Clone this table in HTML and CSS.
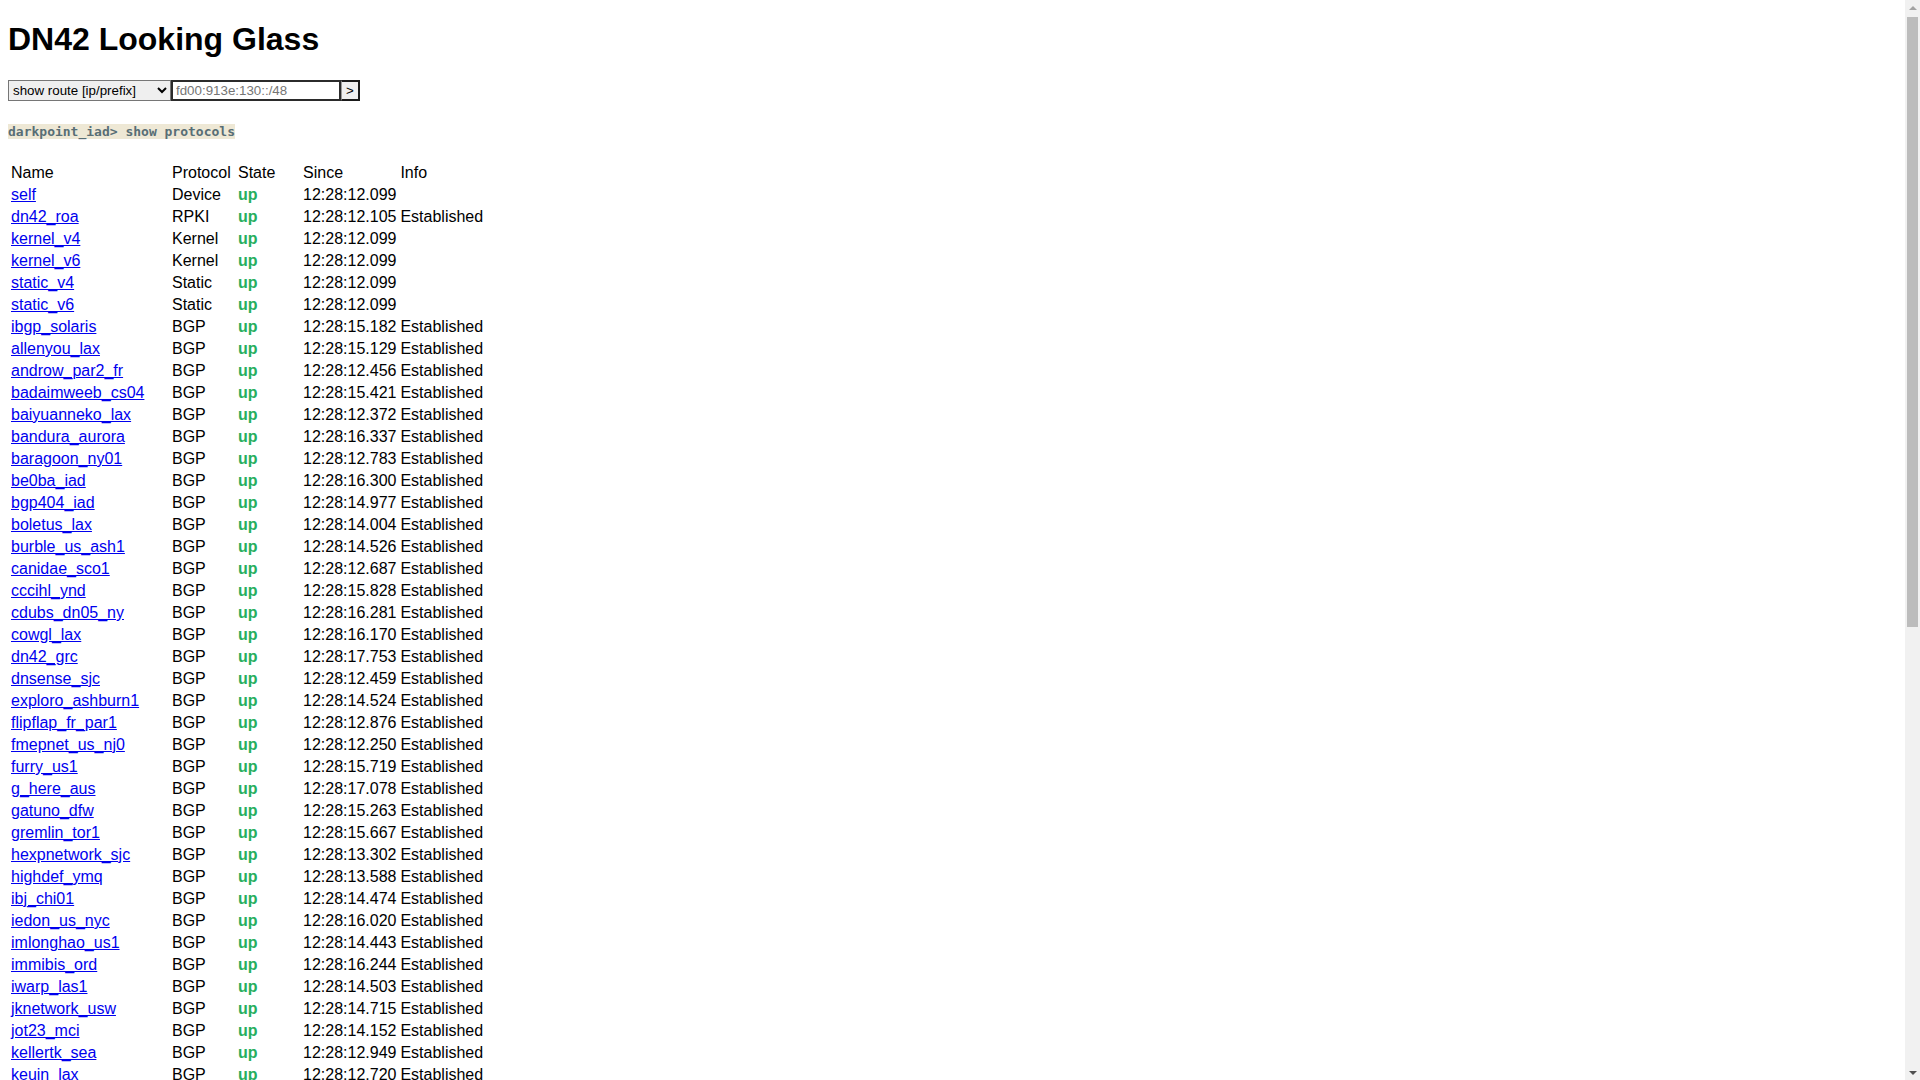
FILE: index.html
```html
<!DOCTYPE html>
<html>
<head>
<meta charset="utf-8">
<title>DN42 Looking Glass</title>
<link rel="stylesheet" href="styles.css">
</head>
<body>
<h1 class="title">DN42 Looking Glass</h1>
<form class="query">
<select class="query-type">
<option>show route [ip/prefix]</option>
<option>show protocols</option>
<option>traceroute</option>
<option>whois</option>
</select><input class="query-target" type="text" placeholder="fd00:913e:130::/48"><button class="query-go" type="button">&gt;</button>
</form>
<pre class="cmd"><code>darkpoint_iad&gt; show protocols</code></pre>
<table class="protocols">
<thead>
<tr><th class="c-name">Name</th><th class="c-proto">Protocol</th><th class="c-state">State</th><th>Since</th><th>Info</th></tr>
</thead>
<tbody>
<tr><td><a href="#">self</a></td><td>Device</td><td class="up">up</td><td>12:28:12.099</td><td></td></tr>
<tr><td><a href="#">dn42_roa</a></td><td>RPKI</td><td class="up">up</td><td>12:28:12.105</td><td>Established</td></tr>
<tr><td><a href="#">kernel_v4</a></td><td>Kernel</td><td class="up">up</td><td>12:28:12.099</td><td></td></tr>
<tr><td><a href="#">kernel_v6</a></td><td>Kernel</td><td class="up">up</td><td>12:28:12.099</td><td></td></tr>
<tr><td><a href="#">static_v4</a></td><td>Static</td><td class="up">up</td><td>12:28:12.099</td><td></td></tr>
<tr><td><a href="#">static_v6</a></td><td>Static</td><td class="up">up</td><td>12:28:12.099</td><td></td></tr>
<tr><td><a href="#">ibgp_solaris</a></td><td>BGP</td><td class="up">up</td><td>12:28:15.182</td><td>Established</td></tr>
<tr><td><a href="#">allenyou_lax</a></td><td>BGP</td><td class="up">up</td><td>12:28:15.129</td><td>Established</td></tr>
<tr><td><a href="#">androw_par2_fr</a></td><td>BGP</td><td class="up">up</td><td>12:28:12.456</td><td>Established</td></tr>
<tr><td><a href="#">badaimweeb_cs04</a></td><td>BGP</td><td class="up">up</td><td>12:28:15.421</td><td>Established</td></tr>
<tr><td><a href="#">baiyuanneko_lax</a></td><td>BGP</td><td class="up">up</td><td>12:28:12.372</td><td>Established</td></tr>
<tr><td><a href="#">bandura_aurora</a></td><td>BGP</td><td class="up">up</td><td>12:28:16.337</td><td>Established</td></tr>
<tr><td><a href="#">baragoon_ny01</a></td><td>BGP</td><td class="up">up</td><td>12:28:12.783</td><td>Established</td></tr>
<tr><td><a href="#">be0ba_iad</a></td><td>BGP</td><td class="up">up</td><td>12:28:16.300</td><td>Established</td></tr>
<tr><td><a href="#">bgp404_iad</a></td><td>BGP</td><td class="up">up</td><td>12:28:14.977</td><td>Established</td></tr>
<tr><td><a href="#">boletus_lax</a></td><td>BGP</td><td class="up">up</td><td>12:28:14.004</td><td>Established</td></tr>
<tr><td><a href="#">burble_us_ash1</a></td><td>BGP</td><td class="up">up</td><td>12:28:14.526</td><td>Established</td></tr>
<tr><td><a href="#">canidae_sco1</a></td><td>BGP</td><td class="up">up</td><td>12:28:12.687</td><td>Established</td></tr>
<tr><td><a href="#">cccihl_ynd</a></td><td>BGP</td><td class="up">up</td><td>12:28:15.828</td><td>Established</td></tr>
<tr><td><a href="#">cdubs_dn05_ny</a></td><td>BGP</td><td class="up">up</td><td>12:28:16.281</td><td>Established</td></tr>
<tr><td><a href="#">cowgl_lax</a></td><td>BGP</td><td class="up">up</td><td>12:28:16.170</td><td>Established</td></tr>
<tr><td><a href="#">dn42_grc</a></td><td>BGP</td><td class="up">up</td><td>12:28:17.753</td><td>Established</td></tr>
<tr><td><a href="#">dnsense_sjc</a></td><td>BGP</td><td class="up">up</td><td>12:28:12.459</td><td>Established</td></tr>
<tr><td><a href="#">exploro_ashburn1</a></td><td>BGP</td><td class="up">up</td><td>12:28:14.524</td><td>Established</td></tr>
<tr><td><a href="#">flipflap_fr_par1</a></td><td>BGP</td><td class="up">up</td><td>12:28:12.876</td><td>Established</td></tr>
<tr><td><a href="#">fmepnet_us_nj0</a></td><td>BGP</td><td class="up">up</td><td>12:28:12.250</td><td>Established</td></tr>
<tr><td><a href="#">furry_us1</a></td><td>BGP</td><td class="up">up</td><td>12:28:15.719</td><td>Established</td></tr>
<tr><td><a href="#">g_here_aus</a></td><td>BGP</td><td class="up">up</td><td>12:28:17.078</td><td>Established</td></tr>
<tr><td><a href="#">gatuno_dfw</a></td><td>BGP</td><td class="up">up</td><td>12:28:15.263</td><td>Established</td></tr>
<tr><td><a href="#">gremlin_tor1</a></td><td>BGP</td><td class="up">up</td><td>12:28:15.667</td><td>Established</td></tr>
<tr><td><a href="#">hexpnetwork_sjc</a></td><td>BGP</td><td class="up">up</td><td>12:28:13.302</td><td>Established</td></tr>
<tr><td><a href="#">highdef_ymq</a></td><td>BGP</td><td class="up">up</td><td>12:28:13.588</td><td>Established</td></tr>
<tr><td><a href="#">ibj_chi01</a></td><td>BGP</td><td class="up">up</td><td>12:28:14.474</td><td>Established</td></tr>
<tr><td><a href="#">iedon_us_nyc</a></td><td>BGP</td><td class="up">up</td><td>12:28:16.020</td><td>Established</td></tr>
<tr><td><a href="#">imlonghao_us1</a></td><td>BGP</td><td class="up">up</td><td>12:28:14.443</td><td>Established</td></tr>
<tr><td><a href="#">immibis_ord</a></td><td>BGP</td><td class="up">up</td><td>12:28:16.244</td><td>Established</td></tr>
<tr><td><a href="#">iwarp_las1</a></td><td>BGP</td><td class="up">up</td><td>12:28:14.503</td><td>Established</td></tr>
<tr><td><a href="#">jknetwork_usw</a></td><td>BGP</td><td class="up">up</td><td>12:28:14.715</td><td>Established</td></tr>
<tr><td><a href="#">jot23_mci</a></td><td>BGP</td><td class="up">up</td><td>12:28:14.152</td><td>Established</td></tr>
<tr><td><a href="#">kellertk_sea</a></td><td>BGP</td><td class="up">up</td><td>12:28:12.949</td><td>Established</td></tr>
<tr><td><a href="#">keuin_lax</a></td><td>BGP</td><td class="up">up</td><td>12:28:12.720</td><td>Established</td></tr>
<tr><td><a href="#">kioubit_us2</a></td><td>BGP</td><td class="up">up</td><td>12:28:13.114</td><td>Established</td></tr>
<tr><td><a href="#">lare_nyc</a></td><td>BGP</td><td class="up">up</td><td>12:28:15.006</td><td>Established</td></tr>
<tr><td><a href="#">lgp_iad</a></td><td>BGP</td><td class="up">up</td><td>12:28:12.811</td><td>Established</td></tr>
<tr><td><a href="#">lutoma_ord</a></td><td>BGP</td><td class="up">up</td><td>12:28:14.390</td><td>Established</td></tr>
<tr><td><a href="#">maraun_ewr</a></td><td>BGP</td><td class="up">up</td><td>12:28:16.552</td><td>Established</td></tr>
<tr><td><a href="#">mhmnet_lax</a></td><td>BGP</td><td class="up">up</td><td>12:28:12.604</td><td>Established</td></tr>
<tr><td><a href="#">moe233_lax</a></td><td>BGP</td><td class="up">up</td><td>12:28:13.745</td><td>Established</td></tr>
<tr><td><a href="#">mol_ord</a></td><td>BGP</td><td class="up">up</td><td>12:28:15.901</td><td>Established</td></tr>
<tr><td><a href="#">nedifinet_nyc</a></td><td>BGP</td><td class="up">up</td><td>12:28:14.238</td><td>Established</td></tr>
<tr><td><a href="#">nickel_chi</a></td><td>BGP</td><td class="up">up</td><td>12:28:12.987</td><td>Established</td></tr>
<tr><td><a href="#">oblivion_yyz</a></td><td>BGP</td><td class="up">up</td><td>12:28:16.411</td><td>Established</td></tr>
<tr><td><a href="#">potat0_lax</a></td><td>BGP</td><td class="up">up</td><td>12:28:13.059</td><td>Established</td></tr>
<tr><td><a href="#">prefixlabs_nyc</a></td><td>BGP</td><td class="up">up</td><td>12:28:15.372</td><td>Established</td></tr>
<tr><td><a href="#">routedbits_ord1</a></td><td>BGP</td><td class="up">up</td><td>12:28:14.660</td><td>Established</td></tr>
<tr><td><a href="#">sebastians_ash</a></td><td>BGP</td><td class="up">up</td><td>12:28:12.533</td><td>Established</td></tr>
<tr><td><a href="#">sernet_sea</a></td><td>BGP</td><td class="up">up</td><td>12:28:16.128</td><td>Established</td></tr>
<tr><td><a href="#">shimanokun_tyo</a></td><td>BGP</td><td class="up">up</td><td>12:28:13.477</td><td>Established</td></tr>
<tr><td><a href="#">simonlin_sfo</a></td><td>BGP</td><td class="up">up</td><td>12:28:15.590</td><td>Established</td></tr>
<tr><td><a href="#">stuart_nyc1</a></td><td>BGP</td><td class="up">up</td><td>12:28:14.821</td><td>Established</td></tr>
<tr><td><a href="#">sunnet_lax</a></td><td>BGP</td><td class="up">up</td><td>12:28:12.668</td><td>Established</td></tr>
<tr><td><a href="#">tchekda_chi</a></td><td>BGP</td><td class="up">up</td><td>12:28:16.795</td><td>Established</td></tr>
<tr><td><a href="#">tech9_iad</a></td><td>BGP</td><td class="up">up</td><td>12:28:13.216</td><td>Established</td></tr>
<tr><td><a href="#">thelegy_ashburn1</a></td><td>BGP</td><td class="up">up</td><td>12:28:15.047</td><td>Established</td></tr>
<tr><td><a href="#">toasty_ord</a></td><td>BGP</td><td class="up">up</td><td>12:28:12.932</td><td>Established</td></tr>
<tr><td><a href="#">tristan_us_east</a></td><td>BGP</td><td class="up">up</td><td>12:28:14.108</td><td>Established</td></tr>
<tr><td><a href="#">uffs_lax</a></td><td>BGP</td><td class="up">up</td><td>12:28:16.463</td><td>Established</td></tr>
<tr><td><a href="#">velizy_nyc</a></td><td>BGP</td><td class="up">up</td><td>12:28:13.871</td><td>Established</td></tr>
<tr><td><a href="#">vultrnet_ewr</a></td><td>BGP</td><td class="up">up</td><td>12:28:15.254</td><td>Established</td></tr>
<tr><td><a href="#">wcstnet_chi</a></td><td>BGP</td><td class="up">up</td><td>12:28:12.719</td><td>Established</td></tr>
<tr><td><a href="#">wiktor_atl</a></td><td>BGP</td><td class="up">up</td><td>12:28:14.982</td><td>Established</td></tr>
<tr><td><a href="#">xuu_ord</a></td><td>BGP</td><td class="up">up</td><td>12:28:16.037</td><td>Established</td></tr>
<tr><td><a href="#">yangzhaofeng_sjc</a></td><td>BGP</td><td class="up">up</td><td>12:28:13.640</td><td>Established</td></tr>
<tr><td><a href="#">yuetau_lax</a></td><td>BGP</td><td class="up">up</td><td>12:28:15.136</td><td>Established</td></tr>
<tr><td><a href="#">zhaofeng_sea</a></td><td>BGP</td><td class="up">up</td><td>12:28:12.501</td><td>Established</td></tr>
</tbody>
</table>
<div class="fake-scrollbar" aria-hidden="true">
<div class="sb-arrow sb-up"></div>
<div class="sb-track"><div class="sb-thumb"></div></div>
<div class="sb-arrow sb-down"></div>
</div>
</body>
</html>
```

FILE: styles.css
```css
html {
  font-family: "Liberation Sans", Arial, sans-serif;
  font-size: 16px;
  color: #000;
}

body {
  margin: 0 8px 8px;
  font-family: "Liberation Sans", Arial, sans-serif;
}

.title {
  font-size: 32px;
  font-weight: bold;
  margin: 21.44px 0;
}

.query {
  margin: 0;
  display: flex;
  align-items: stretch;
}

.query-type {
  font-family: "Liberation Sans", Arial, sans-serif;
  font-size: 13.333px;
  width: 163px;
  height: 21px;
  border: 1px solid #767676;
  background: #efefef;
  color: #000;
}

.query-target {
  font-family: "Liberation Sans", Arial, sans-serif;
  font-size: 13.333px;
  width: 170px;
  height: 21px;
  box-sizing: border-box;
  border: 2px solid #2b2b2b;
  padding: 1px 3px;
}

.query-target::placeholder {
  color: #757575;
}

.query-go {
  font-family: "Liberation Sans", Arial, sans-serif;
  font-size: 13.333px;
  height: 21px;
  padding: 0 4px;
  background: #efefef;
  color: #000;
  border: 2px solid #1a1a1a;
  border-left: 1px solid #9a9a9a;
}

.cmd {
  margin: 23px 0 22px;
  font-family: "DejaVu Sans Mono", monospace;
  font-size: 13px;
}

.cmd code {
  font-family: "DejaVu Sans Mono", monospace;
  font-weight: bold;
  color: #586e75;
  background: #eee8d5;
}

.protocols {
  border-collapse: separate;
  border-spacing: 2px;
}

.protocols th,
.protocols td {
  padding: 1px;
  text-align: left;
  font-weight: normal;
  white-space: nowrap;
}

.protocols .c-name {
  width: 157px;
}

.protocols .c-proto {
  width: 62px;
}

.protocols .c-state {
  width: 61px;
}

.protocols a {
  color: #0000ee;
}

.protocols .up {
  color: #27ae60;
  font-weight: bold;
}

/* window scrollbar as it appears in the capture */
.fake-scrollbar {
  position: fixed;
  top: 0;
  right: 0;
  width: 15px;
  height: 100vh;
  background: #f1f1f1;
  display: flex;
  flex-direction: column;
}

.sb-arrow {
  height: 15px;
  flex: none;
  display: flex;
  align-items: center;
  justify-content: center;
}

.sb-arrow::before {
  content: "";
  width: 0;
  height: 0;
  border-left: 4px solid transparent;
  border-right: 4px solid transparent;
}

.sb-up::before {
  border-bottom: 4px solid #a3a3a3;
}

.sb-down::before {
  border-top: 4px solid #505050;
}

.sb-track {
  flex: 1;
  padding: 0 2px;
}

.sb-thumb {
  height: 610px;
  margin-top: 2px;
  background: #bcbcbc;
}
```
